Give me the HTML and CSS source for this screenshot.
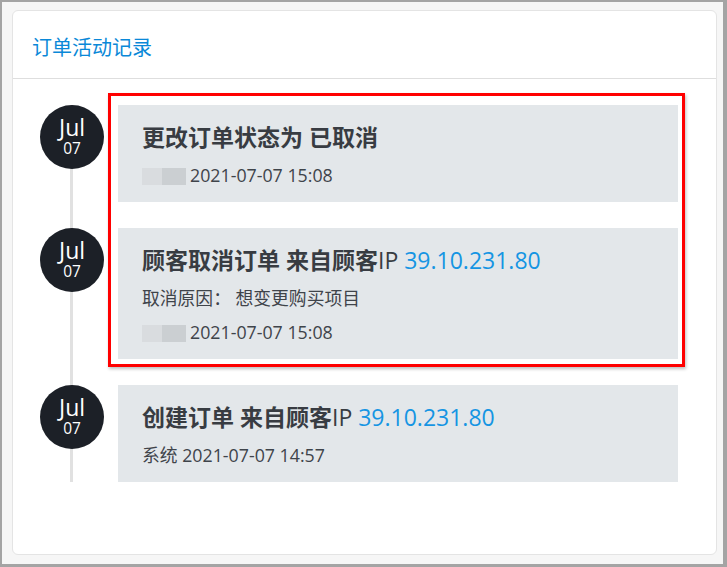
FILE: index.html
```html
<!DOCTYPE html>
<html lang="zh-CN">
<head>
    <meta charset="UTF-8">
    <meta name="viewport" content="width=device-width, initial-scale=1.0">
    <title>订单活动记录</title>
    <link rel="stylesheet" href="styles.css">
</head>
<body>
    <div class="page">
        <div class="panel">
            <div class="panel-header">订单活动记录</div>

            <div class="timeline">
                <div class="timeline-item">
                    <div class="date-badge">
                        <div class="month">Jul</div>
                        <div class="day">07</div>
                    </div>
                    <div class="activity">
                        <div class="activity-title">更改订单状态为 已取消</div>
                        <div class="activity-meta"><span class="masked"></span>2021-07-07 15:08</div>
                    </div>
                </div>

                <div class="timeline-item">
                    <div class="date-badge">
                        <div class="month">Jul</div>
                        <div class="day">07</div>
                    </div>
                    <div class="activity">
                        <div class="activity-title">顾客取消订单 来自顾客<span class="plain">IP <a class="ip">39.10.231.80</a></span></div>
                        <div class="activity-meta">取消原因： 想变更购买项目</div>
                        <div class="activity-meta next"><span class="masked"></span>2021-07-07 15:08</div>
                    </div>
                </div>

                <div class="timeline-item">
                    <div class="date-badge">
                        <div class="month">Jul</div>
                        <div class="day">07</div>
                    </div>
                    <div class="activity">
                        <div class="activity-title">创建订单 来自顾客<span class="plain">IP <a class="ip">39.10.231.80</a></span></div>
                        <div class="activity-meta">系统 2021-07-07 14:57</div>
                    </div>
                </div>

                <!-- выделение первых двух записей -->
                <div class="highlight"></div>
            </div>
        </div>
    </div>
</body>
</html>
```

FILE: styles.css
```css
html, body {
    margin: 0;
    height: 100%;
}
body {
    font-family: "Open Sans", "Noto Sans CJK SC", sans-serif;
    background-color: #a4a4a4;
}
.page {
    box-sizing: border-box;
    height: 562px;
    margin: 2px 4px 3px 2px;
    padding: 8px 6px 9px 10px;
    background-color: #f6f6f6;
    display: flex;
}
.panel {
    flex: 1;
    background-color: #fff;
    border: 1px solid #e4e4e4;
    border-radius: 6px;
}
.panel-header {
    height: 63px;
    padding: 4px 19px 0;
    display: flex;
    align-items: center;
    font-size: 20px;
    color: #0a88d8;
    border-bottom: 1px solid #dedede;
}
.timeline {
    position: relative;
    padding: 26px 38px 0 27px;
    display: flex;
    flex-direction: column;
    gap: 26px;
}
.timeline::before {
    content: "";
    position: absolute;
    left: 57px;
    top: 26px;
    bottom: 0;
    width: 3px;
    background-color: #e1e1e1;
}
.timeline-item {
    position: relative;
    display: flex;
    align-items: flex-start;
    gap: 14px;
}
.date-badge {
    flex-shrink: 0;
    width: 64px;
    height: 64px;
    border-radius: 50%;
    background-color: #1c2027;
    color: #fff;
    display: flex;
    flex-direction: column;
    align-items: center;
    justify-content: center;
}
.month {
    font-size: 23px;
    line-height: 23px;
}
.day {
    font-size: 15.5px;
    line-height: 19px;
}
.activity {
    flex: 1;
    background-color: #e3e7ea;
    padding: 18px 24px 16px;
    color: #3f444a;
}
.activity-title {
    font-size: 23px;
    line-height: 28px;
    font-weight: 600;
    color: #383c42;
}
.plain {
    font-weight: 400;
}
.ip {
    color: #1595e3;
    text-decoration: none;
}
.activity-meta {
    margin-top: 13px;
    font-size: 17.8px;
    line-height: 22px;
}
.activity-meta.next {
    margin-top: 12px;
}
.masked {
    display: inline-block;
    width: 44px;
    height: 17px;
    margin-right: 4px;
    vertical-align: -3px;
    background: linear-gradient(to right, #d9dcdf 45%, #cbcfd2 45%);
}
.highlight {
    position: absolute;
    left: 95px;
    top: 14px;
    width: 577px;
    height: 274px;
    box-sizing: border-box;
    border: 3px solid #ff0000;
    box-shadow: 1px 2px 3px rgba(0,0,0,0.25);
    pointer-events: none;
}
```
